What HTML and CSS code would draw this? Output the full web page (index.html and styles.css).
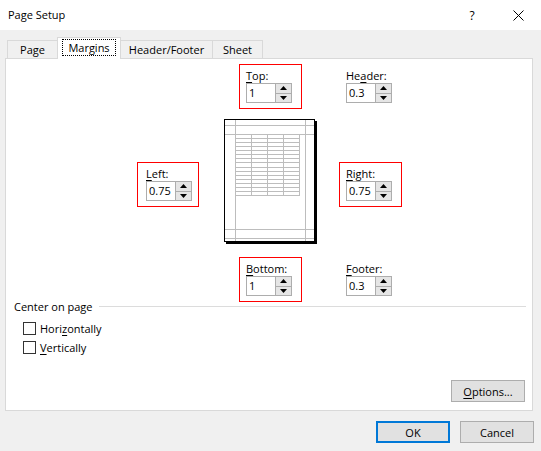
FILE: index.html
```html
<!DOCTYPE html>
<html>
<head>
<meta charset="utf-8">
<link rel="stylesheet" href="styles.css">
</head>
<body>
<div class="titlebar">
  <span class="title">Page Setup</span>
  <span class="cap help">?</span>
  <span class="cap"><svg width="11" height="11" viewBox="0 0 11 11"><path d="M0.5 0.5L10.5 10.5M10.5 0.5L0.5 10.5" stroke="#000" stroke-width="1" fill="none"/></svg></span>
</div>
<div class="main">
  <div class="tabs">
    <div class="tab w51">Page</div>
    <div class="tab sel w64"><span class="focus">Margins</span></div>
    <div class="tab w93">Header/Footer</div>
    <div class="tab w51">Sheet</div>
  </div>
  <div class="panel">
    <div class="diagram">
      <div class="box red m-top"><span class="lbl"><u>T</u>op:</span>
        <div class="spin"><span class="val">1</span><span class="arrows"><i class="up"><svg width="7" height="4"><polygon points="0,4 3.5,0 7,4" fill="#000"/></svg></i><i><svg width="7" height="4"><polygon points="0,0 3.5,4 7,0" fill="#000"/></svg></i></span></div>
      </div>
      <div class="box plain m-hdr"><span class="lbl">He<u>a</u>der:</span>
        <div class="spin"><span class="val">0.3</span><span class="arrows"><i class="up"><svg width="7" height="4"><polygon points="0,4 3.5,0 7,4" fill="#000"/></svg></i><i><svg width="7" height="4"><polygon points="0,0 3.5,4 7,0" fill="#000"/></svg></i></span></div>
      </div>
      <div class="box red m-left"><span class="lbl"><u>L</u>eft:</span>
        <div class="spin"><span class="val">0.75</span><span class="arrows"><i class="up"><svg width="7" height="4"><polygon points="0,4 3.5,0 7,4" fill="#000"/></svg></i><i><svg width="7" height="4"><polygon points="0,0 3.5,4 7,0" fill="#000"/></svg></i></span></div>
      </div>
      <div class="page">
        <svg width="93" height="125" viewBox="0 0 93 125">
          <rect x="0.5" y="0.5" width="90" height="122" fill="#fff" stroke="#000"/>
          <g stroke="#bdbdbd" stroke-width="1">
            <path d="M11.5 1V122M81.5 1V122M1 6.5H90M1 15.5H90M1 110.5H90M1 119.5H90"/>
            <path d="M27.5 15V76M43.5 15V76M59.5 15V76M75.5 15V76"/>
            <path d="M11 19.5H76M11 23.5H76M11 27.5H76M11 31.5H76M11 35.5H76M11 39.5H76M11 43.5H76M11 48.5H76M11 52.5H76M11 56.5H76M11 60.5H76M11 64.5H76M11 68.5H76M11 72.5H76M11 76.5H76"/>
          </g>
          <rect x="91" y="2" width="2" height="123" fill="#000"/>
          <rect x="2" y="123" width="91" height="2" fill="#000"/>
        </svg>
      </div>
      <div class="box red m-right"><span class="lbl"><u>R</u>ight:</span>
        <div class="spin"><span class="val">0.75</span><span class="arrows"><i class="up"><svg width="7" height="4"><polygon points="0,4 3.5,0 7,4" fill="#000"/></svg></i><i><svg width="7" height="4"><polygon points="0,0 3.5,4 7,0" fill="#000"/></svg></i></span></div>
      </div>
      <div class="box red m-bot"><span class="lbl"><u>B</u>ottom:</span>
        <div class="spin"><span class="val">1</span><span class="arrows"><i class="up"><svg width="7" height="4"><polygon points="0,4 3.5,0 7,4" fill="#000"/></svg></i><i><svg width="7" height="4"><polygon points="0,0 3.5,4 7,0" fill="#000"/></svg></i></span></div>
      </div>
      <div class="box plain m-ftr"><span class="lbl"><u>F</u>ooter:</span>
        <div class="spin"><span class="val">0.3</span><span class="arrows"><i class="up"><svg width="7" height="4"><polygon points="0,4 3.5,0 7,4" fill="#000"/></svg></i><i><svg width="7" height="4"><polygon points="0,0 3.5,4 7,0" fill="#000"/></svg></i></span></div>
      </div>
    </div>
    <div class="group"><span>Center on page</span><span class="rule"></span></div>
    <div class="checks">
      <div class="check"><span class="cb"></span>Hori<u>z</u>ontally</div>
      <div class="check"><span class="cb"></span><u>V</u>ertically</div>
    </div>
    <div class="btn opts"><span><u>O</u>ptions...</span></div>
  </div>
  <div class="footer">
    <div class="btn default">OK</div>
    <div class="btn">Cancel</div>
  </div>
</div>
</body>
</html>
```

FILE: styles.css
```css
html, body {
  margin: 0;
  padding: 0;
}
body {
  width: 541px;
  height: 451px;
  overflow: hidden;
  background: #f0f0f0;
  font-family: "Open Sans", "Noto Sans", sans-serif;
  font-size: 11px;
  color: #000;
}
u {
  text-decoration: underline;
  text-underline-offset: 2px;
}
.titlebar {
  height: 30px;
  background: #fff;
  display: flex;
  align-items: center;
}
.title {
  flex: 1;
  margin-left: 8px;
  line-height: 30px;
}
.cap {
  width: 46px;
  height: 30px;
  display: flex;
  align-items: center;
  justify-content: center;
}
.help {
  font-size: 12px;
}
.main {
  padding-top: 7px;
}
.tabs {
  display: flex;
  align-items: flex-end;
  height: 21px;
  padding-left: 7px;
}
.tab {
  box-sizing: border-box;
  height: 18px;
  border: 1px solid #d9d9d9;
  border-bottom: none;
  background: #f0f0f0;
  text-align: center;
  line-height: 17px;
  margin-left: -1px;
}
.tab:first-child {
  margin-left: 0;
}
.w51 { width: 51px; }
.w64 { width: 64px; }
.w93 { width: 93px; }
.tab.sel {
  height: 22px;
  margin-bottom: -1px;
  background: #fff;
  position: relative;
  z-index: 1;
  padding-top: 2px;
  line-height: 15px;
}
.focus {
  display: inline-block;
  outline: 1px dotted #000;
  padding: 0 5px;
}
.panel {
  margin-left: 5px;
  width: 528px;
  height: 353px;
  box-sizing: border-box;
  border: 1px solid #d9d9d9;
  background: #fff;
  display: flex;
  flex-direction: column;
}
.diagram {
  display: grid;
  grid-template-columns: 87px 115px 63px;
  grid-template-rows: 55px 138px 45px;
  margin: 5px 0 0 131px;
  align-items: start;
  justify-items: start;
}
.box {
  box-sizing: border-box;
  width: 63px;
  height: 45px;
  border: 1px solid transparent;
  padding: 3px 6px 0;
}
.box.red {
  border-color: #ff0000;
}
.lbl {
  display: block;
  line-height: 15px;
  height: 15px;
  white-space: nowrap;
}
.m-top { grid-column: 2; grid-row: 1; margin-left: 15px; }
.m-hdr { grid-column: 3; grid-row: 1; }
.m-left { grid-column: 1; grid-row: 2; margin-top: 43px; width: 62px; padding-left: 8px; }
.page { grid-column: 2; grid-row: 2; line-height: 0; }
.m-right { grid-column: 3; grid-row: 2; margin-top: 43px; }
.m-bot { grid-column: 2; grid-row: 3; margin-left: 15px; }
.m-ftr { grid-column: 3; grid-row: 3; }
.spin {
  display: flex;
  box-sizing: border-box;
  width: 46px;
  height: 20px;
  border: 1px solid #adadad;
  background: #fff;
}
.val {
  flex: 1;
  padding-left: 2px;
  line-height: 17px;
}
.arrows {
  width: 16px;
  display: flex;
  flex-direction: column;
  box-sizing: border-box;
  border-left: 1px solid #adadad;
  background: #e5e5e5;
}
.arrows i {
  flex: 1;
  display: flex;
  align-items: center;
  justify-content: center;
  line-height: 0;
}
.arrows i.up {
  border-bottom: 1px solid #adadad;
}
.group {
  display: flex;
  align-items: center;
  height: 15px;
  margin-top: -3px;
  padding-left: 8px;
  white-space: nowrap;
}
.rule {
  flex: 1;
  height: 1px;
  background: #dcdcdc;
  margin: 0 6px;
}
.checks {
  margin-top: 5px;
  padding-left: 17px;
}
.check {
  display: flex;
  align-items: center;
  height: 19px;
}
.cb {
  box-sizing: border-box;
  width: 13px;
  height: 13px;
  border: 1px solid #333;
  background: #fff;
  margin-right: 4px;
}
.btn {
  box-sizing: border-box;
  width: 74px;
  height: 22px;
  border: 1px solid #adadad;
  background: #e1e1e1;
  display: flex;
  align-items: center;
  justify-content: center;
}
.btn.default {
  border: 2px solid #0078d7;
}
.opts {
  margin-top: auto;
  align-self: flex-end;
  margin-right: 7px;
  margin-bottom: 8px;
}
.footer {
  display: flex;
  justify-content: flex-end;
  gap: 10px;
  padding-right: 7px;
  margin-top: 10px;
}
```
